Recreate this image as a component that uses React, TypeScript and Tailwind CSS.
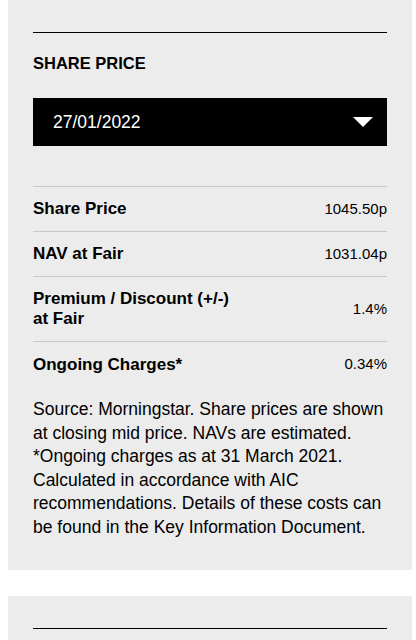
const ROWS: { label: React.ReactNode; value: string; tall?: boolean }[] = [
  { label: 'Share Price', value: '1045.50p' },
  { label: 'NAV at Fair', value: '1031.04p' },
  { label: <>Premium / Discount (+/-)<br />at Fair</>, value: '1.4%', tall: true },
  { label: 'Ongoing Charges*', value: '0.34%' },
];

export default function App() {
  return (
    <div className="min-h-[640px] bg-white font-['Liberation_Sans',Arial,sans-serif] text-black">
      <div className="ml-2 mr-1 bg-[#ececec] px-[25px] pt-8 pb-[30px]">
        <div className="border-t border-black" />
        <h2 className="mt-5 text-[16.5px] font-bold leading-[20px]">SHARE PRICE</h2>

        {/* date picker */}
        <button className="mt-[25px] flex h-12 w-full items-center justify-between bg-black pl-5 pr-[14px] text-white">
          <span className="mt-px text-[17.5px] leading-none">27/01/2022</span>
          <svg width="20" height="10" viewBox="0 0 20 10">
            <polygon points="0,0 20,0 10,10" fill="white" />
          </svg>
        </button>

        <div className="mt-10 border-t border-[#c8c8c8]">
          {ROWS.map((r, i) => (
            <div
              key={i}
              className={`flex items-center justify-between ${r.tall ? 'h-[65px]' : 'h-[45px]'} ${i < ROWS.length - 1 ? 'border-b border-[#c8c8c8]' : ''}`}
            >
              <span className="text-[17px] font-bold leading-[20px]">{r.label}</span>
              <span className="text-[15px]">{r.value}</span>
            </div>
          ))}
        </div>

        <p className="mt-[11px] text-[17.5px] leading-[23.6px]">
          Source: Morningstar. Share prices are shown at closing mid price. NAVs are estimated. *Ongoing charges as at 31 March 2021. Calculated in accordance with AIC recommendations. Details of these costs can be found in the Key Information Document.
        </p>
      </div>

      <div className="ml-2 mr-1 mt-[26px] bg-[#ececec] px-[25px] pt-8 pb-8">
        <div className="border-t border-black" />
      </div>
    </div>
  );
}
